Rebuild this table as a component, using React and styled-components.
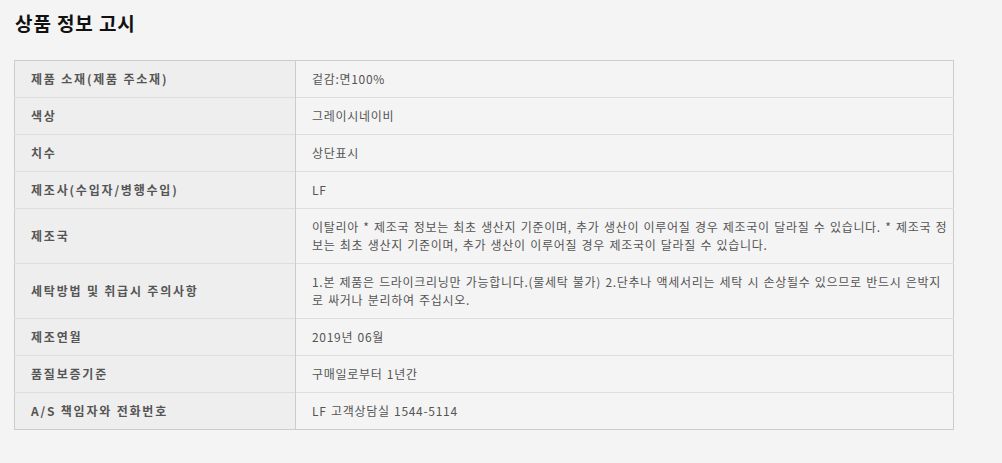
import React from "react";
import styled, { createGlobalStyle } from "styled-components";

const GlobalStyle = createGlobalStyle`
  html, body {
    margin: 0;
    padding: 0;
    background: #f4f4f4;
  }
  body {
    font-family: "Noto Sans CJK KR", "Noto Sans", sans-serif;
  }
`;

const Page = styled.div`
  padding: 8px 48px 0 14px;
  width: 940px;
`;

const Title = styled.h2`
  margin: 0 0 0 1px;
  height: 30px;
  font-size: 19px;
  line-height: 30px;
  font-weight: 700;
  color: #111;
  letter-spacing: 0.9px;
`;

const Table = styled.table`
  margin-top: 22px;
  width: 940px;
  border-collapse: collapse;
  border: 1px solid #cccccc;
  table-layout: fixed;
`;

const Row = styled.tr`
  border-top: 1px solid #dddddd;
  &:first-child {
    border-top: 1px solid #cccccc;
  }
`;

const Label = styled.th`
  width: 281px;
  padding: 9px 16px;
  background: #eeeeee;
  border-right: 1px solid #cccccc;
  text-align: left;
  vertical-align: middle;
  font-size: 12px;
  line-height: 18px;
  font-weight: 700;
  color: #555555;
  letter-spacing: 1.8px;
  box-sizing: border-box;
`;

const Value = styled.td`
  padding: 9px 4px 9px 16px;
  background: #f4f4f4;
  text-align: left;
  vertical-align: middle;
  font-size: 12px;
  line-height: 18px;
  color: #555555;
  letter-spacing: 0.7px;
  word-spacing: 1px;
  word-break: break-all;
`;

const rows = [
  ["제품 소재(제품 주소재)", "겉감:면100%"],
  ["색상", "그레이시네이비"],
  ["치수", "상단표시"],
  ["제조사(수입자/병행수입)", "LF"],
  [
    "제조국",
    "이탈리아 * 제조국 정보는 최초 생산지 기준이며, 추가 생산이 이루어질 경우 제조국이 달라질 수 있습니다. * 제조국 정보는 최초 생산지 기준이며, 추가 생산이 이루어질 경우 제조국이 달라질 수 있습니다.",
  ],
  [
    "세탁방법 및 취급시 주의사항",
    "1.본 제품은 드라이크리닝만 가능합니다.(물세탁 불가) 2.단추나 액세서리는 세탁 시 손상될수 있으므로 반드시 은박지로 싸거나 분리하여 주십시오.",
  ],
  ["제조연월", "2019년 06월"],
  ["품질보증기준", "구매일로부터 1년간"],
  ["A/S 책임자와 전화번호", "LF 고객상담실 1544-5114"],
];

export default function App() {
  return (
    <>
      <GlobalStyle />
      <Page>
        <Title>상품 정보 고시</Title>
        <Table>
          <tbody>
            {rows.map(([k, v]) => (
              <Row key={k}>
                <Label>{k}</Label>
                <Value>{v}</Value>
              </Row>
            ))}
          </tbody>
        </Table>
      </Page>
    </>
  );
}
